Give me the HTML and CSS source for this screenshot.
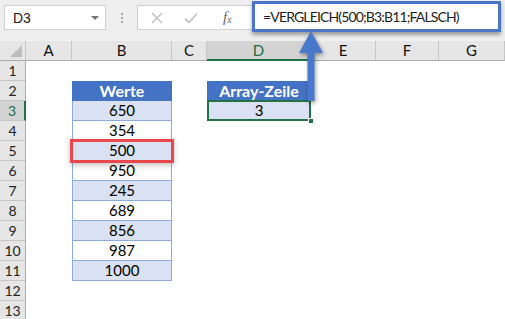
FILE: index.html
```html
<!DOCTYPE html>
<html lang="de">
<head>
    <meta charset="UTF-8">
    <title>VERGLEICH</title>
    <link rel="stylesheet" href="styles.css">
</head>
<body>
    <div class="topbar">
        <div class="namebox">
            <span>D3</span>
            <span class="caret"></span>
        </div>
        <div class="grip"><i></i><i></i><i></i></div>
        <div class="fxtools">
            <svg class="tool" width="12" height="12" viewBox="0 0 12 12"><path d="M1 1 L11 11 M11 1 L1 11" stroke="#c4c4c4" stroke-width="1.6" fill="none"/></svg>
            <svg class="tool" width="14" height="12" viewBox="0 0 14 12"><path d="M1 6.5 L5 10.5 L13 1.5" stroke="#c4c4c4" stroke-width="1.8" fill="none"/></svg>
            <span class="fx">f<sub>x</sub></span>
        </div>
        <div class="formula">=VERGLEICH(500;B3:B11;FALSCH)</div>
    </div>

    <div class="sheet">
        <div class="corner"><span></span></div>
        <div class="colh">A</div>
        <div class="colh">B</div>
        <div class="colh">C</div>
        <div class="colh active">D</div>
        <div class="colh">E</div>
        <div class="colh">F</div>
        <div class="colh">G</div>

        <div class="rowh">1</div><div></div><div></div><div></div><div></div><div></div><div></div><div></div>

        <div class="rowh">2</div><div></div>
        <div class="tb head top">Werte</div><div></div>
        <div class="tb head">Array-Zeile</div><div></div><div></div><div></div>

        <div class="rowh active">3</div><div></div>
        <div class="tb alt">650</div><div></div>
        <div class="tb alt selected">3</div><div></div><div></div><div></div>

        <div class="rowh">4</div><div></div><div class="tb">354</div><div></div><div></div><div></div><div></div><div></div>
        <div class="rowh">5</div><div></div><div class="tb alt mark">500</div><div></div><div></div><div></div><div></div><div></div>
        <div class="rowh">6</div><div></div><div class="tb">950</div><div></div><div></div><div></div><div></div><div></div>
        <div class="rowh">7</div><div></div><div class="tb alt">245</div><div></div><div></div><div></div><div></div><div></div>
        <div class="rowh">8</div><div></div><div class="tb">689</div><div></div><div></div><div></div><div></div><div></div>
        <div class="rowh">9</div><div></div><div class="tb alt">856</div><div></div><div></div><div></div><div></div><div></div>
        <div class="rowh">10</div><div></div><div class="tb">987</div><div></div><div></div><div></div><div></div><div></div>
        <div class="rowh">11</div><div></div><div class="tb alt">1000</div><div></div><div></div><div></div><div></div><div></div>
        <div class="rowh">12</div><div></div><div></div><div></div><div></div><div></div><div></div><div></div>
        <div class="rowh">13</div><div></div><div></div><div></div><div></div><div></div><div></div><div></div>
    </div>

    <svg class="arrow" width="30" height="80" viewBox="0 0 30 80">
        <path d="M11.5 22 L18.5 22 L18.5 72 L11.5 72 Z M3 24 L15 2 L27 24 Z" fill="#4a78cc"/>
    </svg>
</body>
</html>
```

FILE: styles.css
```css
body {
    margin: 0;
    width: 505px;
    height: 319px;
    overflow: hidden;
    position: relative;
    background: #ffffff;
    font-family: Lato, "Liberation Sans", sans-serif;
    color: #000;
}

.topbar {
    display: flex;
    align-items: flex-start;
    height: 41px;
    background: #efefef;
}

.namebox {
    margin: 5px 0 0 4px;
    width: 102px;
    height: 25px;
    box-sizing: border-box;
    border: 1px solid #d0d0d0;
    background: #fff;
    display: flex;
    align-items: center;
    justify-content: space-between;
    padding: 0 6px 0 8px;
    font-family: "Liberation Sans", Arial, sans-serif;
    font-size: 14px;
    color: #222;
}

.caret {
    width: 0;
    height: 0;
    border-left: 4px solid transparent;
    border-right: 4px solid transparent;
    border-top: 4px solid #777;
}

.grip {
    width: 31px;
    height: 36px;
    display: flex;
    flex-direction: column;
    align-items: center;
    justify-content: center;
    gap: 2px;
}

.grip i {
    width: 2px;
    height: 2px;
    background: #a8a8a8;
}

.fxtools {
    margin-top: 5px;
    width: 116px;
    height: 25px;
    box-sizing: border-box;
    border: 1px solid #d0d0d0;
    border-right: none;
    background: #fff;
    display: flex;
    align-items: center;
    padding-left: 13px;
    gap: 0;
}

.tool {
    display: block;
}

.tool + .tool {
    margin-left: 21px;
}

.fx {
    margin-left: 25px;
    font-family: "Liberation Serif", serif;
    font-style: italic;
    font-size: 15px;
    color: #666;
}

.fx sub {
    font-size: 10px;
    vertical-align: -1px;
}

.formula {
    position: relative;
    z-index: 3;
    margin: 1px 0 0 -1px;
    width: 249px;
    height: 31px;
    box-sizing: border-box;
    border: 3px solid #4a76c8;
    background: #fff;
    box-shadow: 0 3px 4px rgba(0, 0, 0, 0.35);
    padding: 4px 0 0 8px;
    font-family: Lato, "Liberation Sans", sans-serif;
    font-size: 14px;
    letter-spacing: -0.85px;
    color: #222;
}

.sheet {
    display: grid;
    grid-template-columns: 26px 46px 100px 35px 104px 65px 63px 66px;
    grid-auto-rows: 20px;
    font-size: 15px;
}

.sheet > div {
    box-sizing: border-box;
}

.corner {
    background: #e6e6e6;
    border-right: 1px solid #c6c6c6;
    border-bottom: 1px solid #ababab;
    position: relative;
}

.corner span {
    position: absolute;
    right: 3px;
    bottom: 3px;
    width: 0;
    height: 0;
    border-left: 12px solid transparent;
    border-bottom: 12px solid #bdbdbd;
}

.colh {
    background: #e6e6e6;
    border-right: 1px solid #c6c6c6;
    border-bottom: 1px solid #ababab;
    text-align: center;
    line-height: 19px;
    color: #111;
}

.colh.active {
    background: #d3d3d3;
    color: #1f6b42;
    border-bottom: 2px solid #217346;
}

.rowh {
    background: #e6e6e6;
    border-right: 1px solid #ababab;
    border-bottom: 1px solid #c6c6c6;
    text-align: center;
    line-height: 20px;
    font-size: 14px;
    color: #222;
}

.rowh.active {
    background: #d3d3d3;
    color: #1f6b42;
    border-right: 2px solid #217346;
}

.tb {
    border-left: 1px solid #8eaadb;
    border-right: 1px solid #8eaadb;
    border-bottom: 1px solid #8eaadb;
    text-align: center;
    line-height: 19px;
}

.tb.head {
    background: #4472c4;
    border-color: #4472c4;
    color: #fff;
    font-weight: bold;
    font-size: 16px;
}

.tb.head.top {
    border-top: none;
}

.tb.alt {
    background: #d9e1f2;
}

.mark {
    position: relative;
    outline: 3px solid #e8474d;
    outline-offset: -1px;
    box-shadow: 0 2px 6px 2px rgba(0, 0, 0, 0.25);
    z-index: 1;
}

.selected {
    position: relative;
}

.selected::before {
    content: "";
    position: absolute;
    left: -1px;
    top: -1px;
    right: -1px;
    bottom: -1px;
    border: 2px solid #217346;
}

.selected::after {
    content: "";
    position: absolute;
    right: -4px;
    bottom: -4px;
    width: 6px;
    height: 6px;
    background: #217346;
    border: 1px solid #fff;
    box-sizing: border-box;
}

.arrow {
    position: absolute;
    left: 296px;
    top: 29px;
    z-index: 4;
    filter: drop-shadow(1px 2px 2px rgba(0, 0, 0, 0.4));
}
```
